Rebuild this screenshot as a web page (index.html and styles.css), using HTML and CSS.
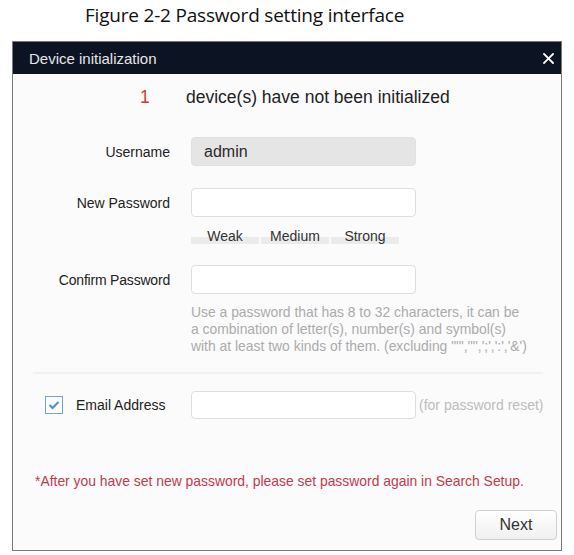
FILE: index.html
```html
<!DOCTYPE html>
<html>
<head>
<meta charset="utf-8">
<link rel="stylesheet" href="styles.css">
</head>
<body>
<div class="caption">Figure 2-2 Password setting interface</div>
<div class="dialog">
  <div class="dlg-head">
    <span class="dlg-title">Device initialization</span>
    <svg class="close" width="11" height="11" viewBox="0 0 11 11"><path d="M1 1L10 10M10 1L1 10" stroke="#fff" stroke-width="1.8" stroke-linecap="square"/></svg>
  </div>
  <div class="dlg-body">
    <div class="status"><span class="count">1</span><span class="status-text">device(s) have not been initialized</span></div>

    <div class="row row-user">
      <div class="label">Username</div>
      <div class="input input-disabled">admin</div>
    </div>

    <div class="row row-pass">
      <div class="label">New Password</div>
      <div class="input"></div>
    </div>

    <div class="strength">
      <div class="seg">Weak</div>
      <div class="seg">Medium</div>
      <div class="seg">Strong</div>
    </div>

    <div class="row row-confirm">
      <div class="label label-confirm">Confirm Password</div>
      <div class="input"></div>
    </div>

    <div class="hint">Use a password that has 8 to 32 characters, it can be<br>a combination of letter(s), number(s) and symbol(s)<br>with at least two kinds of them. (excluding "'",'"',';',':','&amp;')</div>

    <div class="sep"></div>

    <div class="row row-email">
      <div class="label label-check">
        <span class="checkbox"><svg width="12" height="10" viewBox="0 0 12 10"><path d="M1.5 5L4.5 8L10.5 2" fill="none" stroke="#4a8fd6" stroke-width="2"/></svg></span>
        <span>Email Address</span>
      </div>
      <div class="input"></div>
      <span class="reset-note">(for password reset)</span>
    </div>

    <div class="warn">*After you have set new password, please set password again in Search Setup.</div>

    <div class="actions"><button class="btn">Next</button></div>
  </div>
</div>
</body>
</html>
```
FILE: styles.css
```css
html, body {
  margin: 0;
  padding: 0;
  background: #ffffff;
}
body {
  width: 574px;
  height: 555px;
  overflow: hidden;
  font-family: "Liberation Sans", Arial, sans-serif;
}
.caption {
  font-family: "Open Sans", "Noto Sans", sans-serif;
  font-size: 19px;
  color: #111;
  height: 30px;
  line-height: 28px;
  padding-left: 85px;
  margin-top: 1px;
  letter-spacing: -0.2px;
}
.dialog {
  margin: 10px 0 0 12px;
  width: 550px;
  border: 1px solid #7a7a7a;
  background: #fbfbfb;
  box-sizing: border-box;
}
.dlg-head {
  height: 32px;
  background: #0c1424;
  display: flex;
  align-items: center;
  justify-content: space-between;
  padding: 0 7px 0 16px;
}
.dlg-title {
  color: #e6e6e6;
  font-size: 15px;
}
.close {
  display: block;
}
.dlg-body {
  padding: 11px 4px 10px 0;
}
.status {
  display: flex;
  align-items: center;
  height: 24px;
  padding-left: 127px;
  font-size: 17.5px;
  color: #222;
}
.count {
  color: #c83c3c;
  width: 46px;
}
.row {
  display: flex;
  align-items: center;
}
.label {
  width: 157px;
  text-align: right;
  font-size: 14px;
  color: #222;
  margin-right: 21px;
  flex: none;
}
.input {
  width: 225px;
  height: 29px;
  box-sizing: border-box;
  border: 1px solid #dedede;
  border-radius: 4px;
  background: #fff;
  flex: none;
}
.input-disabled {
  background: #e5e5e5;
  border-color: #e0e0e0;
  font-size: 16px;
  color: #2a2a2a;
  line-height: 27px;
  padding-left: 12px;
}
.row-user { margin-top: 28px; }
.row-pass { margin-top: 22px; }
.strength {
  display: flex;
  gap: 2px;
  margin: 12px 0 0 178px;
  width: 208px;
}
.seg {
  flex: 1;
  height: 16px;
  line-height: 15px;
  text-align: center;
  font-size: 14px;
  color: #333;
  background: linear-gradient(to bottom, transparent 0, transparent 8px, #ebebeb 8px, #ebebeb 15px, transparent 15px);
}
.row-confirm { margin-top: 20px; }
.label-confirm { letter-spacing: -0.2px; }
.hint {
  margin: 10px 0 0 178px;
  font-size: 13.9px;
  line-height: 17px;
  color: #ababab;
}
.sep {
  margin: 17px 14px 0 20px;
  height: 2px;
  background: #f0f0f0;
}
.row-email {
  margin-top: 17px;
}
.label-check {
  display: flex;
  align-items: center;
  text-align: left;
  padding-left: 32px;
  box-sizing: border-box;
}
.checkbox {
  width: 18px;
  height: 18px;
  box-sizing: border-box;
  border: 1px solid #6aa5e0;
  background: #fff;
  display: flex;
  align-items: center;
  justify-content: center;
  margin-right: 13px;
}
.row-email .input { height: 28px; }
.reset-note {
  margin-left: 3px;
  font-size: 14px;
  color: #bdbdbd;
}
.warn {
  margin: 53px 0 0 22px;
  font-size: 13.9px;
  line-height: 18px;
  color: #c23a4e;
}
.actions {
  display: flex;
  justify-content: flex-end;
  margin-top: 20px;
}
.btn {
  width: 82px;
  height: 30px;
  border: 1px solid #cfcfcf;
  border-radius: 4px;
  background: linear-gradient(to bottom, #ffffff, #f0f0f0);
  font-family: "Liberation Sans", Arial, sans-serif;
  font-size: 16px;
  color: #333;
  padding: 0;
}
```
